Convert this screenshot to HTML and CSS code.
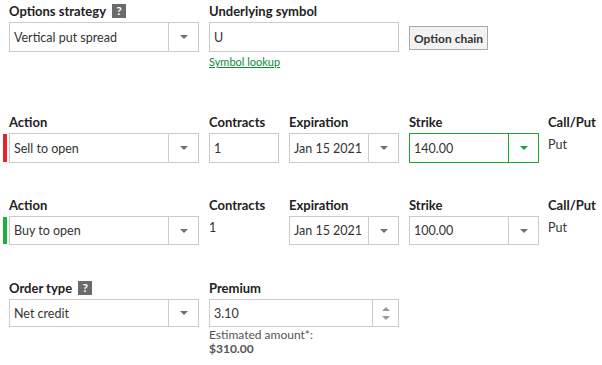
FILE: index.html
```html
<!DOCTYPE html>
<html>
<head>
<meta charset="utf-8">
<link rel="stylesheet" href="styles.css">
</head>
<body>
<div class="form">
  <div class="row row-top">
    <div class="field w190">
      <div class="label">Options strategy <span class="help">?</span></div>
      <div class="select"><span class="val">Vertical put spread</span><span class="arrow"><i class="tri"></i></span></div>
    </div>
    <div class="field w190">
      <div class="label">Underlying symbol</div>
      <div class="input"><span class="val">U</span></div>
      <a class="lookup" href="#">Symbol lookup</a>
    </div>
    <div class="field btn-field">
      <button class="btn">Option chain</button>
    </div>
  </div>

  <div class="row leg">
    <div class="field w190">
      <div class="label">Action</div>
      <div class="select mark sell"><span class="val">Sell to open</span><span class="arrow"><i class="tri"></i></span></div>
    </div>
    <div class="field w70">
      <div class="label">Contracts</div>
      <div class="input"><span class="val">1</span></div>
    </div>
    <div class="field w110">
      <div class="label">Expiration</div>
      <div class="select"><span class="val">Jan 15 2021</span><span class="arrow"><i class="tri"></i></span></div>
    </div>
    <div class="field w130">
      <div class="label">Strike</div>
      <div class="select active"><span class="val">140.00</span><span class="arrow"><i class="tri"></i></span></div>
    </div>
    <div class="field cp">
      <div class="label">Call/Put</div>
      <div class="plain">Put</div>
    </div>
  </div>

  <div class="row leg leg2">
    <div class="field w190">
      <div class="label">Action</div>
      <div class="select mark buy"><span class="val">Buy to open</span><span class="arrow"><i class="tri"></i></span></div>
    </div>
    <div class="field w70">
      <div class="label">Contracts</div>
      <div class="plain">1</div>
    </div>
    <div class="field w110">
      <div class="label">Expiration</div>
      <div class="select"><span class="val">Jan 15 2021</span><span class="arrow"><i class="tri"></i></span></div>
    </div>
    <div class="field w130">
      <div class="label">Strike</div>
      <div class="select"><span class="val">100.00</span><span class="arrow"><i class="tri"></i></span></div>
    </div>
    <div class="field cp">
      <div class="label">Call/Put</div>
      <div class="plain">Put</div>
    </div>
  </div>

  <div class="row leg leg3">
    <div class="field w190">
      <div class="label">Order type <span class="help">?</span></div>
      <div class="select"><span class="val">Net credit</span><span class="arrow"><i class="tri"></i></span></div>
    </div>
    <div class="field w190">
      <div class="label">Premium</div>
      <div class="select spin"><span class="val">3.10</span><span class="arrow spinner"><i class="tri up"></i><i class="tri"></i></span></div>
      <div class="est">Estimated amount*:</div>
      <div class="est-val">$310.00</div>
    </div>
  </div>
</div>
</body>
</html>
```

FILE: styles.css
```css
* { box-sizing: border-box; }
html, body { margin: 0; padding: 0; background: #fff; }
body {
  font-family: "Lato", "Open Sans", sans-serif;
  font-size: 13px;
  color: #333;
}
.form { padding: 2px 0 0 9px; }
.row { display: flex; align-items: flex-start; gap: 10px; }
.leg { margin-top: 44px; }
.leg2 { margin-top: 33px; }
.leg3 { margin-top: 34px; }
.leg .cp { margin-left: -1px; }
.w190 { width: 190px; }
.w70 { width: 70px; }
.w110 { width: 110px; }
.w130 { width: 130px; }
.label {
  font-weight: 700;
  color: #222;
  font-size: 13px;
  line-height: 18px;
  height: 18px;
  margin-bottom: 2px;
  display: flex;
  align-items: center;
  white-space: nowrap;
}
.help {
  display: inline-flex;
  align-items: center;
  justify-content: center;
  width: 14px;
  height: 14px;
  margin-left: 6px;
  background: #6b6b6b;
  color: #fff;
  font-size: 12px;
  font-weight: 700;
  line-height: 14px;
}
.select, .input {
  display: flex;
  height: 30px;
  border: 1px solid #cccccc;
  background: #fff;
  align-items: stretch;
}
.leg2 .select { height: 29px; }
.leg3 .select { height: 28px; }
.val {
  flex: 1;
  display: flex;
  align-items: center;
  padding-left: 4px;
  font-size: 12.5px;
  color: #333;
  white-space: nowrap;
  overflow: hidden;
}
.arrow {
  width: 30px;
  border-left: 1px solid #cccccc;
  display: flex;
  align-items: center;
  justify-content: center;
}
.spin .arrow { width: 26px; }
.tri {
  display: block;
  width: 0;
  height: 0;
  border-left: 4px solid transparent;
  border-right: 4px solid transparent;
  border-top: 4px solid #707070;
}
.spinner { flex-direction: column; gap: 5px; }
.spinner .tri { border-top-color: #999; }
.spinner .tri.up { border-top: 0; border-bottom: 4px solid #999; }
.active { border-color: #17a832; }
.active .arrow { border-left-color: #17a832; }
.active .tri { border-top-color: #17a832; }
.mark { position: relative; }
.mark::before {
  content: "";
  position: absolute;
  left: -7px;
  top: 0;
  bottom: 0;
  width: 4px;
}
.sell::before { background: #e8212b; }
.buy::before { background: #18b33a; }
.lookup {
  display: inline-block;
  margin-top: 3px;
  font-size: 11px;
  color: #0b8a3c;
  text-decoration: underline;
  line-height: 14px;
}
.btn-field { padding-top: 22px; }
.btn {
  display: block;
  height: 24px;
  padding: 0 4px;
  margin-top: 2px;
  font-family: inherit;
  font-weight: 700;
  font-size: 12px;
  color: #333;
  background: #f2f2f2;
  border: 1px solid #aaaaaa;
  border-radius: 0;
}
.plain {
  height: 29px;
  display: flex;
  align-items: center;
  font-size: 12.5px;
  color: #333;
}
.leg2 .plain { align-items: flex-start; padding-top: 4px; }
.cp .plain { align-items: flex-start; padding-top: 4px; }
.est {
  margin-top: 1px;
  font-size: 12px;
  line-height: 14px;
  color: #555;
}
.est-val {
  font-size: 12px;
  line-height: 14px;
  font-weight: 700;
  color: #555;
}
```
